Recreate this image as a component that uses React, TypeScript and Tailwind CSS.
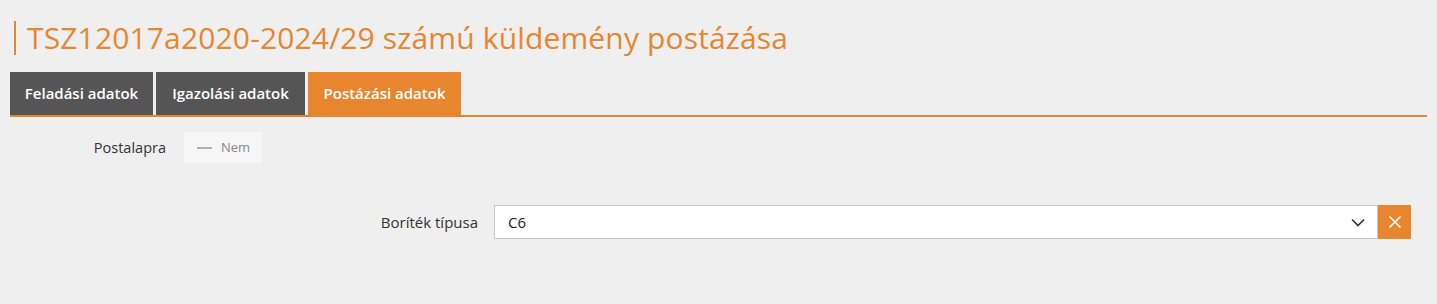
import React from "react";

export default function App() {
  const font = { fontFamily: '"Open Sans", "Noto Sans", sans-serif' };
  return (
    <div className="w-[1437px] h-[304px] bg-[#efefef] text-[#333]" style={font}>
      <div className="pt-[14px] pl-[14px] flex items-center h-[48px] box-content">
        <div className="w-[2px] h-[34px] bg-[#e8862f]" />
        <h1 className="ml-[11px] text-[30px] leading-[34px] text-[#e8862f] font-normal tracking-[0.15px]">
          TSZ12017a2020-2024/29 számú küldemény postázása
        </h1>
      </div>
      <div className="mt-[10px] mx-[10px] flex gap-[3px] border-b-2 border-[#e8862f]">
        <div className="w-[143px] h-[43px] bg-[#555555] text-white text-[15px] font-semibold flex items-center justify-center">
          Feladási adatok
        </div>
        <div className="w-[149px] h-[43px] bg-[#555555] text-white text-[15px] font-semibold flex items-center justify-center">
          Igazolási adatok
        </div>
        <div className="w-[153px] h-[43px] bg-[#e8862f] text-white text-[15px] font-semibold flex items-center justify-center">
          Postázási adatok
        </div>
      </div>
      <div className="mt-[15px] flex items-center">
        <div className="w-[166px] text-right text-[14.5px] text-[#333]">Postalapra</div>
        <div className="ml-[18px] w-[78px] h-[31px] bg-[#f6f6f6] flex items-center pl-[13px] text-[13px] text-[#888]">
          <span className="w-[15px] h-[2px] bg-[#b0b0b0] mr-[9px]" />
          Nem
        </div>
      </div>
      <div className="mt-[42px] flex items-center">
        <div className="w-[478px] text-right text-[15px] text-[#333]">Boríték típusa</div>
        <div className="ml-[16px] w-[884px] h-[34px] bg-white border border-[#c8c8c8] flex items-center pl-[13px] pr-[12px] text-[15px] text-[#222]">
          <span className="flex-1">C6</span>
          <svg width="14" height="9" viewBox="0 0 14 9" fill="none">
            <path d="M1 1.5 L7 7.5 L13 1.5" stroke="#333" strokeWidth="1.6" />
          </svg>
        </div>
        <div className="w-[33px] h-[34px] bg-[#e8862f] flex items-center justify-center">
          <svg width="14" height="14" viewBox="0 0 14 14" fill="none">
            <path d="M1.5 1.5 L12.5 12.5 M12.5 1.5 L1.5 12.5" stroke="#fff" strokeWidth="1.6" />
          </svg>
        </div>
      </div>
    </div>
  );
}
